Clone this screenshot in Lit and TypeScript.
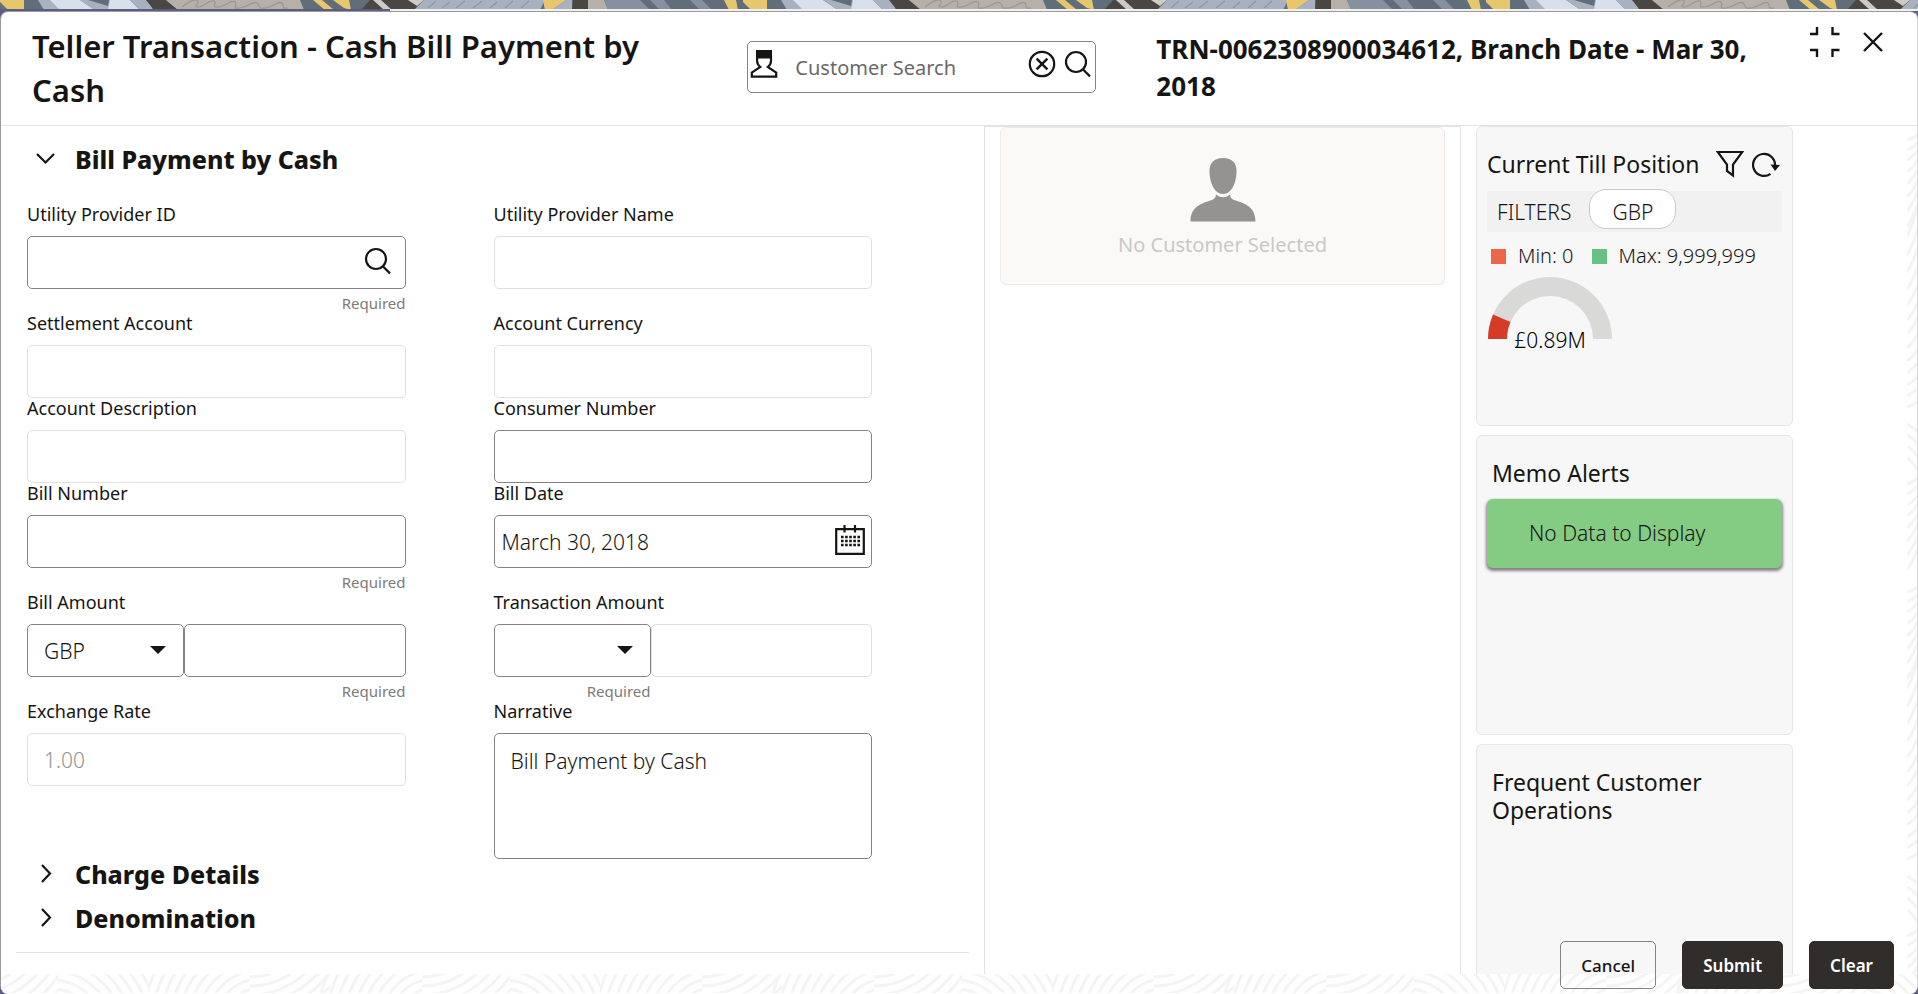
import { LitElement, html, css, svg, nothing } from "lit";
import { customElement, property, state } from "lit/decorators.js";
import { classMap } from "lit/directives/class-map.js";

const INK = "#161513";

/* ---------- icons ---------- */
const searchIcon = html`<svg width="28" height="28" viewBox="0 0 28 28" fill="none" stroke=${INK} stroke-width="2.2" aria-hidden="true">
  <circle cx="12" cy="12" r="10"></circle><path d="M18.8 19.2 26 26.4"></path></svg>`;
const clearIcon = html`<svg width="28" height="28" viewBox="0 0 28 28" fill="none" stroke=${INK} stroke-width="2.2" aria-hidden="true">
  <circle cx="14" cy="14" r="12.2"></circle><path d="m8.6 8.6 10.8 10.8M19.4 8.6 8.6 19.4" stroke-width="2.4"></path></svg>`;
const personIcon = html`<svg width="28" height="28" viewBox="0 0 28 28" fill="none" stroke=${INK} stroke-width="2.2" aria-hidden="true">
  <path d="M6 0h16v8.500H6z" fill=${INK} stroke="none"></path>
  <path d="M7.100 6v5c0 2.500 1.500 4.600 3.200 6L1.800 22.600v4h24.400v-4L17.800 17c1.700-1.400 3.200-3.500 3.200-6V6" stroke-linejoin="miter"></path></svg>`;
const calendarIcon = html`<svg width="30" height="30" viewBox="0 0 30 30" fill="none" aria-hidden="true">
  <path d="M1.200 4.200h27.600v24.600H1.200z" stroke=${INK} stroke-width="2.200"></path>
  <path d="M9.500 0v7.500M20 0v7.500" stroke=${INK} stroke-width="2.200"></path>
  ${[12, 16, 20].map((y) => svg`<path d=${`M6 ${y}h19`} stroke=${INK} stroke-width="2.400" stroke-dasharray="2.600 1.500"></path>`)}</svg>`;
const chevronDown = html`<svg width="20" height="20" viewBox="0 0 20 20" fill="none" stroke=${INK} stroke-width="2.2" aria-hidden="true"><path d="m1 5 8.500 8.500L18 5"></path></svg>`;
const chevronRight = html`<svg width="20" height="20" viewBox="0 0 20 20" fill="none" stroke=${INK} stroke-width="2.200" aria-hidden="true"><path d="m6 1 8 8.500L6 18"></path></svg>`;
const collapseIcon = html`<svg width="30" height="30" viewBox="0 0 30 30" fill="none" stroke=${INK} stroke-width="2.4" aria-hidden="true">
  <path d="M0 7h7V0M29.500 7h-7V0M0 23h7v7M29.500 23h-7v7"></path></svg>`;
const closeIcon = html`<svg width="20" height="20" viewBox="0 0 20 20" fill="none" stroke=${INK} stroke-width="2.400" aria-hidden="true"><path d="m1 1 18 18M19 1 1 19"></path></svg>`;
const filterIcon = html`<svg width="28" height="28" viewBox="0 0 28 28" fill="none" stroke=${INK} stroke-width="2.2" aria-hidden="true">
  <path d="M1.800 2h24.400L17 14.500v11l-6-4.500v-6.500z"></path></svg>`;
const refreshIcon = html`<svg width="28" height="28" viewBox="0 0 28 28" fill="none" stroke=${INK} stroke-width="2.200" aria-hidden="true">
  <path d="M18.500 23.800A11 11 0 1 1 23 16"></path><path d="m18.500 14.500 9.500.500-5 6z" fill=${INK} stroke="none"></path></svg>`;
const avatarIcon = html`<svg width="66" height="64" viewBox="0 0 66 64" fill="#949392" aria-hidden="true">
  <path d="M33 0c9 0 13.500 5 13.500 13 0 12-5 23-13.500 23S19.500 25 19.500 13C19.500 5 24 0 33 0z"></path>
  <path d="M26 36.500c1.800 1.600 4 2.700 7 2.700s5.200-1.100 7-2.700c.3 2.200.9 3.900 3 5C52 45 65.500 47 65.500 63.500H.5C.5 47 14 45 23 41.500c2.100-1.100 2.700-2.800 3-5z"></path></svg>`;
const caret = html`<svg class="caret" width="16" height="8" viewBox="0 0 16 8" aria-hidden="true"><path d="M0 0h16L8 8z" fill=${INK}></path></svg>`;

/* ---------- decorative patterns ---------- */
const bannerShapes: [string, string][] = [
  ["#5f6e79", "0,0 743,0 743,10 0,10"],
  ["#e6c76e", "-2,0 24,0 24,10 8,10"],
  ["#a8b1bf", "38,0 52,0 64,10 44,10"],
  ["#d8e0ec", "50,0 80,0 95,10 60,10"],
  ["#a8b1bf", "80,0 112,0 125,10 95,10"],
  ["#5f6e79", "88,0 109,0 108,6"],
  ["#d8e0ec", "110,0 130,0 140,10 108,10"],
  ["#a8b1bf", "130,0 149,0 153,10 140,10"],
  ["#4a4643", "146,0 166,0 178,10 154,10"],
  ["#b7b0a9", "166,0 300,0 304,10 178,10"],
  ["#e6c76e", "313,0 322,0 334,10 325,10"],
  ["#e6c76e", "333,0 349,0 351,10 344,8"],
  ["#4a4643", "370,0 425,0 414,10 361,10"],
  ["#cfcac5", "373,0 381,0 392,10 384,10"],
  ["#cfcac5", "408,0 424,0 417,6"],
  ["#a8b1bf", "424,0 545,0 540,10 414,10"],
  ["#e6c76e", "543,0 566,0 552,10 545,10"],
  ["#a8b1bf", "566,0 572,0 572,10 552,10"],
  ["#4a4643", "573,0 588,0 588,10 572,10"],
  ["#b7b0a9", "588,0 604,0 608,10 588,10"],
  ["#8590a0", "604,0 640,0 650,10 608,10"],
  ["#8590a0", "650,0 664,0 672,10 660,10"],
  ["#8590a0", "690,0 702,0 712,10 700,10"],
  ["#e6c76e", "724,0 736,0 738,10 729,10"],
];
const banner = html`<svg class="banner" width="100%" height="9" aria-hidden="true">
  <defs><pattern id="tile" width="743" height="9" patternUnits="userSpaceOnUse">
    ${bannerShapes.map(([fill, points]) => svg`<polygon fill=${fill} points=${points}></polygon>`)}
    <path d="M182 7c8-6 14-9 16-6s-6 6 0 6 12-8 16-6-4 7 4 6 14-8 17-5-4 7 5 6 13-8 17-5 0 6 8 5 14-8 17-5-2 6 6 5" fill="none" stroke="#9c958f" stroke-width="1.200"></path>
    <path d="m428 8 8-7m6 7 8-6m6 6 9-7m8 7 9-7m8 7 7-6m8 6 8-7m8 7 8-7" stroke="#8b96a4" stroke-width="1.200"></path>
  </pattern></defs>
  <rect width="100%" height="9" fill="url(#tile)"></rect></svg>`;

/* families of concentric arcs, one family per slice of the footer tile */
const families = [
  { x: 0, w: 102, cx: 112, cy: 50 },
  { x: 102, w: 80, cx: 102, cy: -60 },
  { x: 170, w: 104, cx: 286, cy: 50 },
  { x: 274, w: 88, cx: 274, cy: -60 },
  { x: 362, w: 98, cx: 356, cy: 60 },
];
const footerTexture = html`<svg class="texture-bottom" width="100%" height="19" aria-hidden="true">
  <defs><pattern id="waves" x="147" width="452" height="20" patternUnits="userSpaceOnUse">
    ${families.map((f) => svg`<svg x=${f.x} y="0" width=${f.w} height="20" viewBox=${`${f.x} 0 ${f.w} 20`} overflow="hidden">
      ${Array.from({ length: 12 }, (_, i) => svg`<circle cx=${f.cx} cy=${f.cy} r=${36 + i * 9} fill="none" stroke="#f4f4f4" stroke-width="3"></circle>`)}</svg>`)}
  </pattern></defs>
  <rect width="100%" height="20" fill="url(#waves)"></rect></svg>`;

const sideStrokes = (): string => {
  const bands = [[6, 100, 5, 26], [102, 280, 30, 5], [290, 334, -8, -14], [350, 448, 6, 24]];
  let d = "";
  for (const [from, to, a, b] of bands) {
    for (let y = from; y < to; ) {
      const rise = a + ((b - a) * (y - from)) / (to - from);
      d += `M0 ${Math.round(y)}q6 ${-Math.round(rise * 0.35)} 11 ${-Math.round(rise)}`;
      y += 8 + Math.abs(rise) * 0.35;
    }
  }
  return d;
};
const sideTexture = html`<svg class="texture-side" width="11" height="100%" aria-hidden="true">
  <defs><pattern id="ripples" width="11" height="452" patternUnits="userSpaceOnUse">
    <path d=${sideStrokes()} fill="none" stroke="#f4f4f4" stroke-width="3"></path></pattern></defs>
  <rect width="11" height="100%" fill="url(#ripples)"></rect></svg>`;

const base = css`
  * { box-sizing: border-box; }
  h1, h2, h3, p { margin: 0; font-weight: inherit; }
  button, input, select, textarea { font-family: inherit; color: inherit; margin: 0; }
  svg { display: block; flex: none; }
  .icon { padding: 0; border: 0; background: none; cursor: pointer; }
`;

/* ---------- form ---------- */
interface Field {
  id: string;
  label: string;
  kind?: "text" | "search" | "date" | "money" | "area";
  value?: string;
  currency?: string;
  locked?: boolean;
  required?: boolean;
}

const FIELDS: Field[] = [
  { id: "provider-id", label: "Utility Provider ID", kind: "search", required: true },
  { id: "provider-name", label: "Utility Provider Name", locked: true },
  { id: "settlement", label: "Settlement Account", locked: true },
  { id: "currency", label: "Account Currency", locked: true },
  { id: "description", label: "Account Description", locked: true },
  { id: "consumer", label: "Consumer Number" },
  { id: "bill-number", label: "Bill Number", required: true },
  { id: "bill-date", label: "Bill Date", kind: "date", value: "March 30, 2018" },
  { id: "bill-amount", label: "Bill Amount", kind: "money", currency: "GBP", required: true },
  { id: "txn-amount", label: "Transaction Amount", kind: "money", currency: "", locked: true, required: true },
  { id: "rate", label: "Exchange Rate", value: "1.00", locked: true },
  { id: "narrative", label: "Narrative", kind: "area", value: "Bill Payment by Cash" },
];

@customElement("form-field")
class FormField extends LitElement {
  @property({ attribute: false }) field!: Field;

  static styles = [base, css`
    :host { display: block; }
    label { display: block; font-size: 18px; line-height: 20px; padding-bottom: 12px; }
    .control { position: relative; display: flex; }
    .box {
      flex: 1; min-width: 0; width: 100%; height: 53px; padding: 0 16px;
      border: 1px solid #868482; border-radius: 5px; background: #fff;
      font-size: 21px; font-weight: 300; outline-offset: 0;
    }
    .box.locked { border-color: #e0dfde; color: #949392; }
    .box.date { padding-left: 7px; }
    textarea.box { height: 126px; padding: 13px 16px; line-height: 28px; resize: none; display: block; }
    .trailing { position: absolute; right: 14px; top: 11px; }
    .trailing.date { right: 7px; top: 10px; }
    .pick { position: relative; flex: 0 0 157px; }
    select.box { appearance: none; display: block; }
    .caret { position: absolute; right: 18px; top: 22px; pointer-events: none; }
    .help { font-size: 15px; line-height: 20px; padding-top: 4px; text-align: right; color: #7d7b79; font-weight: 400; }
    .help.short { width: 157px; }
  `];

  private control() {
    const f = this.field;
    const cls = classMap({ box: true, locked: !!f.locked, date: f.kind === "date" });
    const input = html`<input class=${cls} id=${f.id} type="text" .value=${f.value ?? ""} ?readonly=${f.locked}>`;
    switch (f.kind) {
      case "area":
        return html`<textarea class="box" id=${f.id} .value=${f.value ?? ""}></textarea>`;
      case "search":
        return html`${input}<button class="icon trailing" aria-label="Search provider">${searchIcon}</button>`;
      case "date":
        return html`${input}<button class="icon trailing date" aria-label="Choose date">${calendarIcon}</button>`;
      case "money":
        return html`<div class="pick"><select class="box" aria-label=${f.label + " currency"}>
            <option>${f.currency}</option></select>${caret}</div>${input}`;
      default:
        return input;
    }
  }

  render() {
    const f = this.field;
    return html`<label for=${f.id}>${f.label}</label>
      <div class="control">${this.control()}</div>
      ${f.required ? html`<div class=${classMap({ help: true, short: f.kind === "money" && !!f.locked })}>Required</div>` : nothing}`;
  }
}

@customElement("payment-form")
class PaymentForm extends LitElement {
  @state() private open = true;

  static styles = [base, css`
    :host { display: block; padding: 18px 15px 0; }
    .section { display: flex; align-items: center; gap: 19px; height: 30px; width: 100%; padding: 0 20px; text-align: left; font-size: 25px; font-weight: 800; line-height: 30px; }
    .fields { display: grid; grid-template-columns: 1fr 1fr; padding: 30px 9px 0 11px; }
    .cell { padding-right: 88px; }
    h2 + h2 { margin-top: 14px; }
    .rule { border: 0; border-top: 1px solid #e4e3e2; margin: 19px 0 0; }
  `];

  render() {
    return html`
      <h2><button class="icon section" aria-expanded=${this.open} @click=${() => (this.open = !this.open)}>
        ${this.open ? chevronDown : chevronRight}Bill Payment by Cash</button></h2>
      ${this.open ? html`<div class="fields">${FIELDS.map((f) => html`<form-field class="cell" .field=${f}></form-field>`)}</div>` : nothing}
      <h2><button class="icon section" aria-expanded="false">${chevronRight}Charge Details</button></h2>
      <h2><button class="icon section" aria-expanded="false">${chevronRight}Denomination</button></h2>
      <hr class="rule">`;
  }
}

/* ---------- widgets ---------- */
const polar = (r: number, share: number) =>
  `${(63 - r * Math.cos(Math.PI * share)).toFixed(1)} ${(62 - r * Math.sin(Math.PI * share)).toFixed(1)}`;
const ring = (from: number, to: number) =>
  `M${polar(62, from)}A62 62 0 0 1 ${polar(62, to)}L${polar(43, to)}A43 43 0 0 0 ${polar(43, from)}z`;

@customElement("widget-column")
class WidgetColumn extends LitElement {
  static styles = [base, css`
    :host { display: flex; flex-direction: column; gap: 9px; }
    .card { height: 300px; flex: none; padding: 23px 10px 0; border: 1px solid #e7e6e5; border-radius: 6px; background: #f7f7f7; }
    .card.last { flex: 1 1 0; min-height: 180px; border-bottom: 0; border-radius: 6px 6px 0 0; }
    h3 { font-size: 23px; line-height: 28px; padding: 0 20px 0 5px; }
    .head { display: flex; align-items: center; height: 28px; gap: 8px; padding-right: 2px; }
    .head h3 { padding: 0; flex: 1; white-space: nowrap; }
    .filters { display: flex; align-items: center; height: 41px; margin-top: 13px; padding-left: 10px; background: #f1f1f1; font-size: 21px; font-weight: 300; gap: 18px; }
    .pill { height: 40px; width: 87px; padding: 0; margin-bottom: 5px; border: 1px solid #cbcac9; border-radius: 17px; background: #fff; font-size: 21px; font-weight: 300; line-height: 44px; }
    .legend { display: flex; align-items: center; gap: 12px; padding: 10px 0 0 4px; font-size: 20px; font-weight: 300; line-height: 28px; white-space: nowrap; }
    .swatch { width: 15px; height: 15px; background: #ed6647; }
    .swatch.max { background: #68c182; margin-left: 6px; }
    .gauge { position: relative; width: 126px; margin-top: 7px; }
    .reading { position: absolute; left: 0; right: 0; top: 49px; text-align: center; font-size: 21px; line-height: 28px; font-weight: 300; color: #000; }
    .memo { margin-top: 12px; padding: 20px 42px; border-radius: 6px; background: #84cb84; box-shadow: 0 2px 3px 1px rgba(60, 50, 60, .6); font-size: 21px; line-height: 29px; font-weight: 300; }
  `];

  render() {
    return html`
      <section class="card">
        <div class="head"><h3>Current Till Position</h3>
          <button class="icon" aria-label="Filter">${filterIcon}</button>
          <button class="icon" aria-label="Refresh">${refreshIcon}</button></div>
        <div class="filters"><span>FILTERS</span><button class="pill">GBP</button></div>
        <div class="legend"><span class="swatch"></span><span>Min: 0</span><span class="swatch max"></span><span>Max: 9,999,999</span></div>
        <div class="gauge">
          <svg width="126" height="62" viewBox="0 0 126 62" aria-hidden="true">
            <path d=${ring(0, 1)} fill="#d9d9d8"></path><path d=${ring(0, 0.13)} fill="#d63b25"></path></svg>
          <span class="reading">£0.89M</span></div>
      </section>
      <section class="card"><h3>Memo Alerts</h3><div class="memo">No Data to Display</div></section>
      <section class="card last"><h3>Frequent Customer Operations</h3></section>`;
  }
}

/* ---------- page ---------- */
@customElement("app-root")
class AppRoot extends LitElement {
  static styles = [base, css`
    :host { display: flex; flex-direction: column; min-height: 100vh; background: #5b5d85; color: #161513; font-family: "Noto Sans", "Open Sans", sans-serif; }
    .track { height: 2px; background: linear-gradient(90deg, #5b5d85 390px, #f1f0ef 390px); }
    .dialog { position: relative; flex: 1; display: flex; flex-direction: column; border: 1px solid #9a9a9a; border-right-color: #d8d8d8; border-bottom-color: transparent; border-radius: 8px; background: #fff; overflow: hidden; }
    header { display: flex; align-items: flex-start; min-height: 114px; padding: 12px 34px 13px 31px; border-bottom: 1px solid #e4e3e2; }
    h1 { flex: 0 0 36%; font-size: 31px; line-height: 44px; font-weight: 600; }
    .search { display: flex; align-items: flex-start; flex: 0 0 349px; min-width: 0; height: 52px; margin: 17px 60px 0 49px; padding: 8px 3px 0 2px; border: 1px solid #868482; border-radius: 5px; }
    .search input { flex: 1; min-width: 0; height: 34px; border: 0; background: none; padding: 0 0 0 17px; font-size: 20px; font-weight: 400; outline: none; }
    .search input::placeholder { color: #6b6967; opacity: 1; }
    .search .find { margin-left: 8px; }
    .trn { flex: 1; font-size: 26px; line-height: 37px; font-weight: 700; padding: 7px 30px 0 0; }
    .tools { display: flex; align-items: center; gap: 23px; padding-top: 3px; }
    main { flex: 1; display: grid; grid-template-columns: minmax(0, 983fr) minmax(0, 477fr) minmax(0, 332fr) minmax(0, 114fr) 10px; background: #fff; }
    .customer { border: 1px solid #e4e3e2; border-bottom: 0; padding: 0 15px; }
    .nobody { display: flex; flex-direction: column; align-items: center; height: 158px; padding-top: 30px; gap: 9px; border: 1px solid #eceae8; border-radius: 6px; background: #faf9f8; color: #c9c8c6; font-size: 20px; line-height: 28px; font-weight: 400; }
    .widgets { padding-left: 15px; }
    .edge { padding-top: 8px; overflow: hidden; grid-column: 5; }
    .texture-bottom { background: #fff; }
    .actions { position: absolute; right: 23px; bottom: 4px; display: flex; gap: 26px; }
    .btn { height: 48px; padding: 0 20px; border: 1px solid #312d2a; border-radius: 5px; background: #312d2a; color: #fff; font-size: 17px; font-weight: 600; cursor: pointer; }
    .btn.plain { background: transparent; border-color: #868482; color: #161513; font-weight: 500; }
  `];

  render() {
    return html`
      ${banner}
      <div class="track"></div>
      <div class="dialog" role="dialog" aria-label="Teller Transaction">
        <header>
          <h1>Teller Transaction - Cash Bill Payment by Cash</h1>
          <div class="search" role="search">
            ${personIcon}
            <input type="text" aria-label="Customer Search" placeholder="Customer Search">
            <button class="icon" aria-label="Clear search">${clearIcon}</button>
            <button class="icon find" aria-label="Search">${searchIcon}</button>
          </div>
          <p class="trn">TRN-0062308900034612, Branch Date - Mar 30, 2018</p>
          <div class="tools">
            <button class="icon" aria-label="Collapse">${collapseIcon}</button>
            <button class="icon" aria-label="Close">${closeIcon}</button>
          </div>
        </header>
        <main>
          <payment-form></payment-form>
          <section class="customer"><div class="nobody">${avatarIcon}<span>No Customer Selected</span></div></section>
          <widget-column class="widgets"></widget-column>
          <div class="edge">${sideTexture}</div>
        </main>
        ${footerTexture}
        <div class="actions">
          <button class="btn plain">Cancel</button>
          <button class="btn">Submit</button>
          <button class="btn">Clear</button>
        </div>
      </div>`;
  }
}
